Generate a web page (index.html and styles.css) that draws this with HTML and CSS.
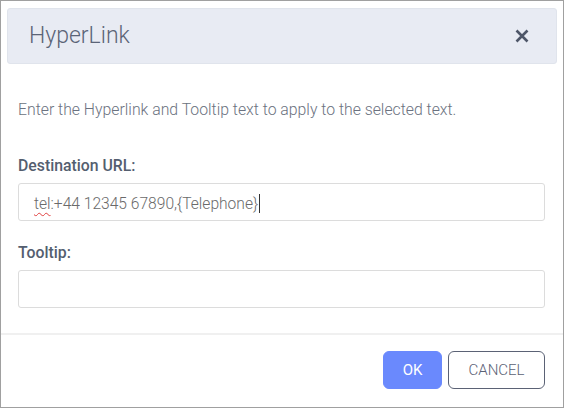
FILE: index.html
```html
<!DOCTYPE html>
<html>
<head>
<meta charset="utf-8">
<link rel="stylesheet" href="styles.css">
</head>
<body>
<div class="dialog">
  <div class="header">
    <div class="title">HyperLink</div>
    <svg class="close" width="14" height="14" viewBox="0 0 14 14"><path d="M1.5 1.5L12.5 12.5M12.5 1.5L1.5 12.5" stroke="#4e5668" stroke-width="2.6" fill="none"/></svg>
  </div>
  <div class="content">
    <p class="desc">Enter the Hyperlink and Tooltip text to apply to the selected text.</p>
    <div class="label first">Destination URL:</div>
    <div class="field"><span class="spell">tel</span>:+44 12345 67890,{Telephone}<span class="caret"></span></div>
    <div class="label second">Tooltip:</div>
    <div class="field"></div>
  </div>
  <div class="footer">
    <button class="btn ok">OK</button>
    <button class="btn cancel">CANCEL</button>
  </div>
</div>
</body>
</html>
```
FILE: styles.css
```css
html, body { margin: 0; padding: 0; background: #fff; }
body { font-family: Roboto, "Liberation Sans", sans-serif; }
.dialog {
  width: 564px;
  height: 408px;
  box-sizing: border-box;
  border: 1px solid #a0a0a0;
  display: flex;
  flex-direction: column;
}
.header {
  margin: 7px 6px 0 6px;
  height: 56px;
  box-sizing: border-box;
  background: #e8ebf3;
  border: 1px solid #e0e4ec;
  border-radius: 3px;
  display: flex;
  align-items: center;
  justify-content: space-between;
  padding: 0 27px 0 21px;
}
.title { font-size: 23px; color: #5b6477; font-weight: 300; line-height: 24px; }
.close { display: block; }
.content { padding: 0 18px 0 17px; }
.desc { margin: 37px 0 0 0; font-size: 15.8px; line-height: 18px; color: #6b7280; font-weight: 300; }
.label { font-size: 15.8px; line-height: 18px; font-weight: 500; color: #545e6f; }
.label.first { margin-top: 38px; }
.label.second { margin-top: 23px; }
.field {
  margin-top: 8px;
  height: 38px;
  box-sizing: border-box;
  border: 1px solid #dcdcdc;
  border-radius: 3px;
  padding: 3px 14px 0 15px;
  display: flex;
  align-items: center;
  font-size: 15.6px;
  color: #6a6a6a;
  font-weight: 300;
  white-space: pre;
}
.spell { text-decoration: underline wavy #e04040; text-decoration-thickness: 1px; text-underline-offset: 3px; }
.caret { display: inline-block; width: 1px; height: 19px; background: #333; margin-left: 1px; }
.footer {
  margin-top: 25px;
  border-top: 2px solid #f0f0f0;
  padding: 16px 18px 0 0;
  display: flex;
  justify-content: flex-end;
  gap: 6px;
}
.btn {
  height: 38px;
  box-sizing: border-box;
  font-family: Roboto, "Liberation Sans", sans-serif;
  font-size: 15px;
  border-radius: 6px;
  padding: 0;
}
.ok { width: 59px; background: #6a89fd; color: #fff; border: 1px solid #6a89fd; }
.cancel { width: 97px; background: #fff; color: #5b6275; border: 1px solid #5b6275; font-weight: 300; }
```
